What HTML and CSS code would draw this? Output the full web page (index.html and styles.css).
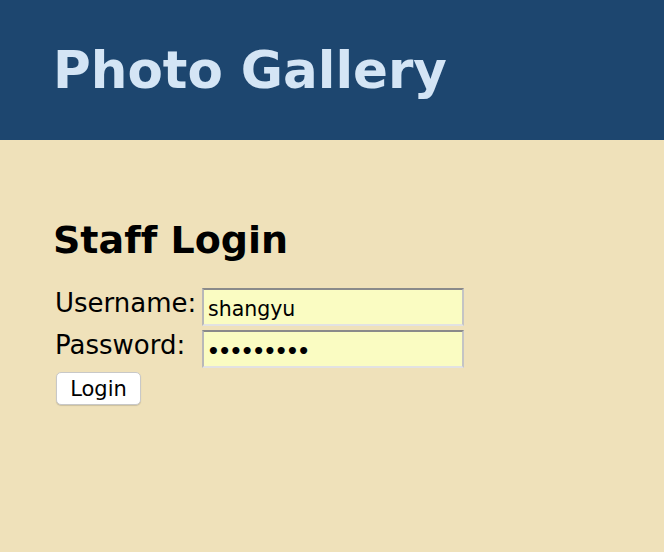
FILE: index.html
```html
<!DOCTYPE html>
<html>
<head>
<meta charset="utf-8">
<title>Photo Gallery</title>
<link rel="stylesheet" href="styles.css">
</head>
<body>
<header class="banner">
  <h1 class="site-title">Photo Gallery</h1>
</header>
<main class="content">
  <h2 class="login-title">Staff Login</h2>
  <form class="login-form">
    <div class="row">
      <label class="label">Username:</label>
      <input class="field" type="text" value="shangyu">
    </div>
    <div class="row">
      <label class="label">Password:</label>
      <input class="field field-pass" type="password" value="123456789">
    </div>
    <button class="btn" type="button">Login</button>
  </form>
</main>
</body>
</html>
```
FILE: styles.css
```css
html, body {
  margin: 0;
  padding: 0;
}
body {
  background: #efe1ba;
  font-family: "DejaVu Sans", Verdana, sans-serif;
  font-variant-ligatures: none;
  color: #000;
  width: 664px;
  height: 552px;
  overflow: hidden;
}
.banner {
  background: #1d466f;
  height: 140px;
  padding: 40px 0 0 53px;
  box-sizing: border-box;
}
.site-title {
  margin: 0;
  color: #d4e5f5;
  font-size: 51.5px;
  font-weight: bold;
  line-height: 60px;
}
.content {
  padding: 78px 0 0 53px;
}
.login-title {
  margin: 0 0 26px 0;
  font-size: 38px;
  font-weight: bold;
  line-height: 44px;
}
.row {
  display: flex;
  align-items: flex-start;
  margin-bottom: 4px;
}
.label {
  width: 149px;
  font-size: 26px;
  line-height: 30px;
  margin-top: 0;
  padding-left: 2px;
  box-sizing: border-box;
}
.field {
  width: 262px;
  height: 38px;
  box-sizing: border-box;
  background: #fafcc2;
  border-width: 2px;
  border-style: solid;
  border-color: #8a8a8a #c4c4c4 #e2e2e2 #b8b8b8;
  font-family: "DejaVu Sans", Verdana, sans-serif;
  font-size: 20.5px;
  padding: 4px 4px 0 4px;
  margin: 0;
  color: #000;
  outline: none;
}
.field-pass {
  font-size: 20px;
  letter-spacing: -1.5px;
  font-weight: bold;
  padding-left: 3px;
}
.btn {
  display: block;
  margin: 1px 0 0 3px;
  width: 85px;
  height: 33px;
  background: #fff;
  border: 1px solid #c8c8c8;
  border-radius: 5px;
  font-family: "DejaVu Sans", Verdana, sans-serif;
  font-size: 21px;
  color: #000;
  padding: 0;
  box-shadow: 0 1px 1px rgba(0,0,0,0.15);
}
```
